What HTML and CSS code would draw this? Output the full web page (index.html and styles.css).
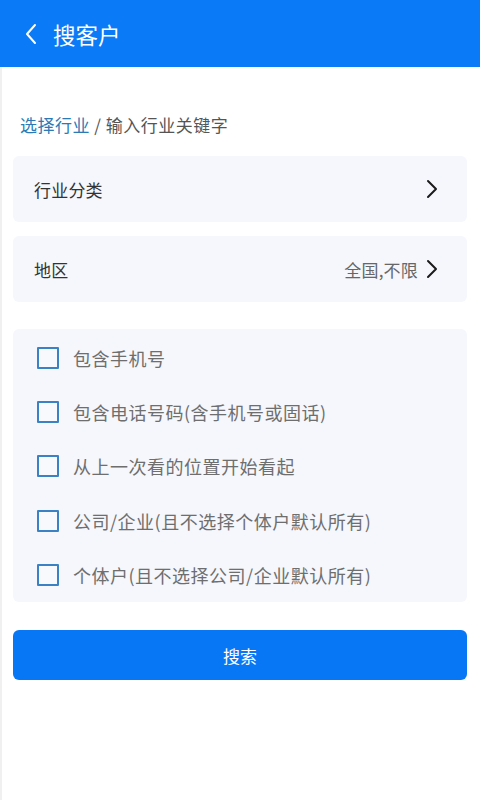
FILE: index.html
```html
<!DOCTYPE html>
<html lang="zh-CN">
<head>
<meta charset="utf-8">
<title>搜客户</title>
<link rel="stylesheet" href="styles.css">
</head>
<body>
<header class="topbar">
  <svg class="back" width="14" height="22" viewBox="0 0 14 22"><path d="M11 2 L3 11 L11 20" fill="none" stroke="#fff" stroke-width="2" stroke-linecap="round" stroke-linejoin="round"/></svg>
  <h1 class="title">搜客户</h1>
</header>
<main class="content">
  <div class="crumb"><span class="crumb-active">选择行业</span> / 输入行业关键字</div>
  <div class="row-card first">
    <span class="row-label">行业分类</span>
    <span class="row-right">
      <svg class="chev" width="12" height="20" viewBox="0 0 12 20"><path d="M2 2 L10 10 L2 18" fill="none" stroke="#1a1a1a" stroke-width="2" stroke-linecap="round" stroke-linejoin="round"/></svg>
    </span>
  </div>
  <div class="row-card">
    <span class="row-label">地区</span>
    <span class="row-right"><span class="row-value">全国,不限</span>
      <svg class="chev" width="12" height="20" viewBox="0 0 12 20"><path d="M2 2 L10 10 L2 18" fill="none" stroke="#1a1a1a" stroke-width="2" stroke-linecap="round" stroke-linejoin="round"/></svg>
    </span>
  </div>
  <div class="check-card">
    <label class="check-item"><span class="box"></span><span class="check-text">包含手机号</span></label>
    <label class="check-item"><span class="box"></span><span class="check-text">包含电话号码(含手机号或固话)</span></label>
    <label class="check-item"><span class="box"></span><span class="check-text">从上一次看的位置开始看起</span></label>
    <label class="check-item"><span class="box"></span><span class="check-text">公司/企业(且不选择个体户默认所有)</span></label>
    <label class="check-item"><span class="box"></span><span class="check-text">个体户(且不选择公司/企业默认所有)</span></label>
  </div>
  <button class="search-btn">搜索</button>
</main>
</body>
</html>
```

FILE: styles.css
```css
* { box-sizing: border-box; }
html, body { margin: 0; padding: 0; background: #fff; }
body {
  width: 480px;
  min-height: 800px;
  font-family: "Noto Sans CJK SC", "Noto Sans", sans-serif;
}
.topbar {
  height: 67px;
  background: #0a7af7;
  display: flex;
  align-items: center;
  padding-left: 24px;
}
.back { display: block; margin-top: 1px; }
.title {
  margin: 0 0 0 15px;
  font-size: 22.5px;
  font-weight: 400;
  color: #fff;
  line-height: 30px;
}
.content {
  min-height: 733px;
  border-left: 2px solid #f0f0f0;
  padding: 46px 13px 0 11px;
}
.crumb {
  font-size: 17px;
  line-height: 24px;
  color: #555;
  padding-left: 7px;
  letter-spacing: 0.5px;
}
.crumb-active { color: #2b7ab6; }
.row-card {
  height: 66px;
  background: #f5f7fc;
  border-radius: 6px;
  display: flex;
  align-items: center;
  justify-content: space-between;
  padding: 0 29px 0 21px;
  margin-top: 14px;
}
.row-card.first { margin-top: 19px; }
.row-label { font-size: 17px; color: #333; letter-spacing: 0.2px; }
.row-right { display: flex; align-items: center; }
.row-value { font-size: 17px; color: #666; margin-right: 8px; letter-spacing: 0.2px; }
.chev { display: block; }
.check-card {
  margin-top: 27px;
  background: #f5f7fc;
  border-radius: 6px;
  padding: 2px 0 0 24px;
  height: 273px;
}
.check-item {
  height: 54.2px;
  display: flex;
  align-items: center;
}
.box {
  width: 22px;
  height: 22px;
  border: 2px solid #3a82c4;
  border-radius: 1px;
  background: #f7f9fc;
  flex: none;
}
.check-text {
  margin-left: 14px;
  font-size: 18px;
  color: #6e6e6e;
  letter-spacing: 0.5px;
}
.search-btn {
  display: block;
  width: 100%;
  height: 50px;
  margin-top: 28px;
  border: none;
  border-radius: 6px;
  background: #0877f6;
  color: #fff;
  font-family: "Noto Sans CJK SC", "Noto Sans", sans-serif;
  font-size: 17px;
}
```
